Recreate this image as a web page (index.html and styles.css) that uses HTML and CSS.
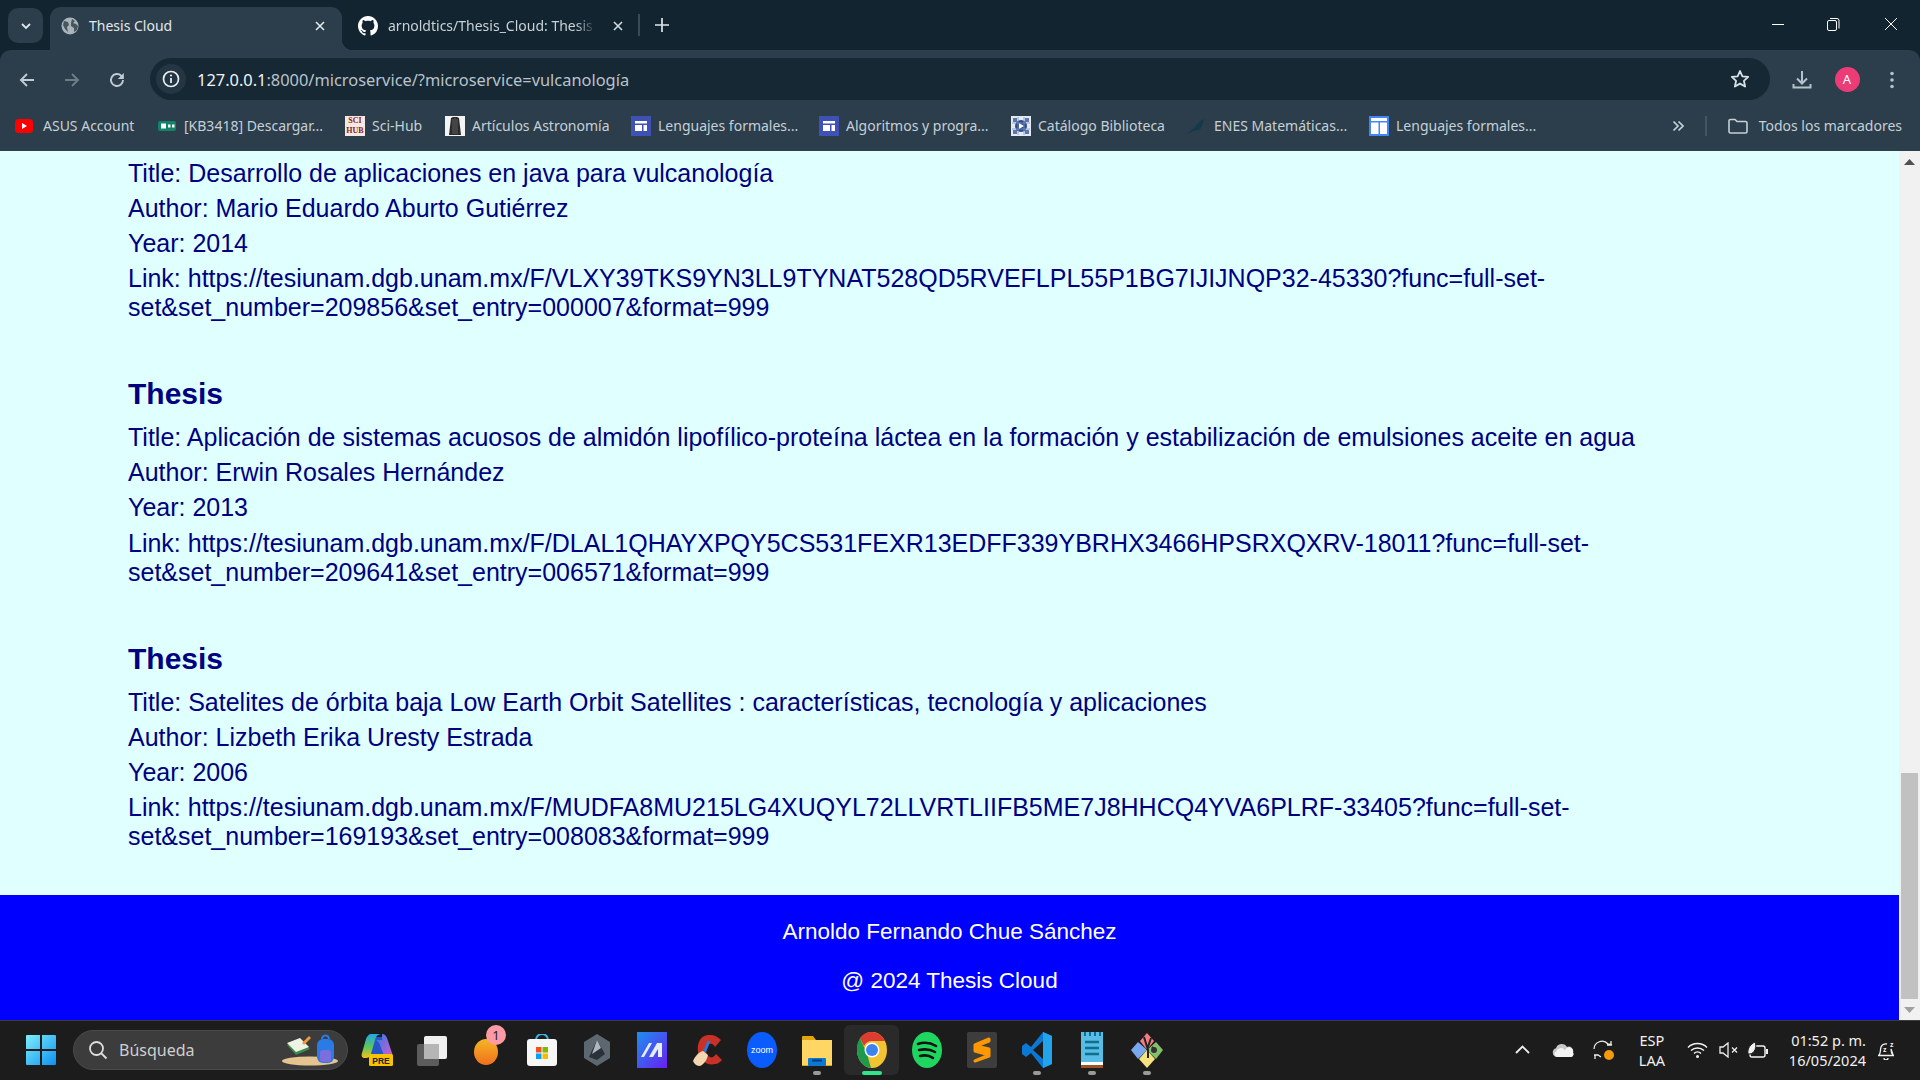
FILE: index.html
```html
<!DOCTYPE html>
<html lang="es">
<head>
    <meta charset="UTF-8">
    <title>Thesis Cloud</title>
    <link rel="stylesheet" href="styles.css">
</head>
<body>
    <!-- browser chrome -->
    <div class="tabstrip">
        <div class="tab-search"><svg width="12" height="12" viewBox="0 0 12 12"><path d="M2 4l4 4 4-4" fill="none" stroke="#dfe6ea" stroke-width="1.8"/></svg></div>
        <div class="tab tab-active">
            <svg class="favicon" width="18" height="18" viewBox="0 0 18 18"><circle cx="9" cy="9" r="8.5" fill="#aab4bb"/><path d="M3 4l4 1 1 3-2 2 1 5-3-3-2-4zM11 2l3 2-2 2 3 1 2 2-1 4-3 2 0-4-3-2 0-3z" fill="#46565f"/></svg>
            <span class="tab-title">Thesis Cloud</span>
            <svg class="tab-close" width="12" height="12" viewBox="0 0 12 12"><path d="M2 2l8 8M10 2l-8 8" stroke="#e3e8eb" stroke-width="1.6"/></svg>
        </div>
        <div class="tab tab-other">
            <svg class="favicon" width="20" height="20" viewBox="0 0 16 16"><path fill="#fff" d="M8 0C3.58 0 0 3.58 0 8c0 3.54 2.29 6.53 5.47 7.59.4.07.55-.17.55-.38 0-.19-.01-.82-.01-1.49-2.01.37-2.53-.49-2.69-.94-.09-.23-.48-.94-.82-1.13-.28-.15-.68-.52-.01-.53.63-.01 1.08.58 1.23.82.72 1.21 1.87.87 2.33.66.07-.52.28-.87.51-1.07-1.78-.2-3.64-.89-3.64-3.95 0-.87.31-1.59.82-2.15-.08-.2-.36-1.02.08-2.12 0 0 .67-.21 2.2.82.64-.18 1.32-.27 2-.27s1.36.09 2 .27c1.53-1.04 2.2-.82 2.2-.82.44 1.1.16 1.92.08 2.12.51.56.82 1.27.82 2.15 0 3.07-1.87 3.75-3.65 3.95.29.25.54.73.54 1.48 0 1.07-.01 1.93-.01 2.2 0 .21.15.46.55.38A8.01 8.01 0 0016 8c0-4.42-3.58-8-8-8z"/></svg>
            <span class="tab-title tab-fade">arnoldtics/Thesis_Cloud: Thesis</span>
            <svg class="tab-close" width="12" height="12" viewBox="0 0 12 12"><path d="M2 2l8 8M10 2l-8 8" stroke="#d5dce0" stroke-width="1.6"/></svg>
        </div>
        <div class="tab-divider"></div>
        <svg class="tab-new" width="14" height="14" viewBox="0 0 14 14"><path d="M7 0v14M0 7h14" stroke="#dfe6ea" stroke-width="1.7"/></svg>
        <div class="window-controls">
            <svg width="14" height="14" viewBox="0 0 14 14"><path d="M1 7.5h12" stroke="#fff"/></svg>
            <svg width="14" height="14" viewBox="0 0 14 14"><rect x="1.5" y="3.5" width="9" height="10" rx="1.5" fill="none" stroke="#fff"/><path d="M4 1.5h7a2 2 0 012 2v8" fill="none" stroke="#fff"/></svg>
            <svg width="14" height="14" viewBox="0 0 14 14"><path d="M1 1l12 12M13 1L1 13" stroke="#fff"/></svg>
        </div>
    </div>

    <div class="toolbar">
        <div class="tool-btn"><svg width="18" height="18" viewBox="0 0 18 18"><path d="M16 9H3M9 3L3 9l6 6" fill="none" stroke="#c0ccd4" stroke-width="1.9"/></svg></div>
        <div class="tool-btn"><svg width="18" height="18" viewBox="0 0 18 18"><path d="M2 9h13M9 3l6 6-6 6" fill="none" stroke="#6d7d88" stroke-width="1.9"/></svg></div>
        <div class="tool-btn"><svg width="18" height="18" viewBox="0 0 18 18"><path d="M15 9a6 6 0 11-1.8-4.3L15 6.5" fill="none" stroke="#c0ccd4" stroke-width="1.9"/><path d="M15.8 2v6h-6z" fill="#c0ccd4"/></svg></div>
        <div class="omnibox">
            <div class="info-chip"><svg width="18" height="18" viewBox="0 0 18 18"><circle cx="9" cy="9" r="7.5" fill="none" stroke="#e8edf0" stroke-width="1.7"/><path d="M9 8v5" stroke="#e8edf0" stroke-width="1.8"/><circle cx="9" cy="5.5" r="1.1" fill="#e8edf0"/></svg></div>
            <span class="url"><span class="url-host">127.0.0.1</span>:8000/microservice/?microservice=vulcanología</span>
            <svg class="star" width="20" height="20" viewBox="0 0 20 20"><path d="M10 2l2.4 5.3 5.8.6-4.3 3.9 1.2 5.7L10 14.6l-5.1 2.9 1.2-5.7L1.8 7.9l5.8-.6z" fill="none" stroke="#dbe2e6" stroke-width="1.8" stroke-linejoin="round"/></svg>
        </div>
        <div class="tool-right">
            <div class="tool-btn"><svg width="20" height="20" viewBox="0 0 20 20"><path d="M10 1v12M5 8.5l5 5 5-5M1.5 14v3.5h17V14" fill="none" stroke="#b4c2cc" stroke-width="2"/></svg></div>
            <div class="tool-btn"><div class="avatar">A</div></div>
            <div class="tool-btn"><svg width="6" height="18" viewBox="0 0 6 18"><circle cx="3" cy="2.5" r="1.8" fill="#b4c2cc"/><circle cx="3" cy="9" r="1.8" fill="#b4c2cc"/><circle cx="3" cy="15.5" r="1.8" fill="#b4c2cc"/></svg></div>
        </div>
    </div>

    <div class="bookmarks">
        <div class="bookmark-list">
            <div class="bookmark"><svg width="21" height="14" viewBox="0 0 21 14"><rect width="18" height="14" rx="3.5" fill="#f00"/><path d="M7 4l5 3-5 3z" fill="#fff"/></svg>ASUS Account</div>
            <div class="bookmark"><svg width="19" height="12" viewBox="0 0 19 12"><rect y="1" width="18" height="10" rx="2" fill="#118467"/><rect x="3" y="3.5" width="5" height="5" fill="#fff"/><rect x="10" y="4.5" width="2.5" height="3" fill="#fff"/><rect x="14" y="4.5" width="2.5" height="3" fill="#fff"/></svg>[KB3418] Descargar...</div>
            <div class="bookmark"><span class="scihub">SCI<br>HUB</span>Sci-Hub</div>
            <div class="bookmark"><svg width="20" height="20" viewBox="0 0 20 20"><rect width="20" height="20" fill="#f4f4f4"/><path d="M6 2l2-1h4l2 1 2 17H4z" fill="#2a2a2a"/><path d="M8 3v15M10 2v16M12 3v15" stroke="#777" stroke-width=".7"/></svg>Artículos Astronomía</div>
            <div class="bookmark"><svg width="20" height="20" viewBox="0 0 20 20"><rect width="20" height="20" fill="#3f51b5"/><path d="M4 5h12v2.5H4zM4 9h7v6H4zM12.5 9H16v6h-3.5z" fill="#fff"/></svg>Lenguajes formales...</div>
            <div class="bookmark"><svg width="20" height="20" viewBox="0 0 20 20"><rect width="20" height="20" fill="#3f51b5"/><path d="M4 5h12v2.5H4zM4 9h7v6H4zM12.5 9H16v6h-3.5z" fill="#fff"/></svg>Algoritmos y progra...</div>
            <div class="bookmark"><svg width="20" height="20" viewBox="0 0 20 20"><rect width="20" height="20" fill="#e4e9f2"/><path d="M2 2h4v4H2zM14 2h4v4h-4zM2 14h4v4H2zM14 14h4v4h-4z" fill="#5d78ad"/><circle cx="10" cy="10" r="6" fill="#2f4c8c"/><path d="M8 7l5 3-5 3z" fill="#fff"/><path d="M7 1v18M13 1v18M1 7h18M1 13h18" stroke="#7c93bf" stroke-width=".8"/></svg>Catálogo Biblioteca</div>
            <div class="bookmark"><svg width="20" height="16" viewBox="0 0 20 16"><path d="M0 15c3-1 5-3 8-6 2-3 5-5 8-8 1 0 1 2 0 3-1 3-1 6-4 8-3 0-7 1-9 3z" fill="#123a4c"/></svg>ENES Matemáticas...</div>
            <div class="bookmark"><svg width="20" height="20" viewBox="0 0 20 20"><rect width="20" height="20" fill="#4285f4"/><path d="M2 2h16v3H2zM2 6.5h7.5V18H2zM11 6.5h7V18h-7z" fill="#fff"/></svg>Lenguajes formales...</div>
        </div>
        <svg class="more" width="12" height="12" viewBox="0 0 12 12"><path d="M1.5 1.5L6 6l-4.500 4.500M6.500 1.500L11 6l-4.500 4.500" fill="none" stroke="#c5d0d7" stroke-width="1.7"/></svg>
        <div class="bookmarks-divider"></div>
        <div class="all-bookmarks"><svg width="20" height="16" viewBox="0 0 20 16"><path d="M1 3a1.5 1.5 0 011.5-1.5H7l2 2h8.5A1.5 1.5 0 0119 5v8.500a1.500 1.500 0 01-1.500 1.500h-15A1.500 1.500 0 011 13.500z" fill="none" stroke="#c5d0d7" stroke-width="1.6"/></svg>Todos los marcadores</div>
    </div>

    <!-- page -->
    <div class="viewport">
        <div class="page">
            <main class="thesis-list">
                <section class="thesis">
                    <p>Title: Desarrollo de aplicaciones en java para vulcanología</p>
                    <p>Author: Mario Eduardo Aburto Gutiérrez</p>
                    <p>Year: 2014</p>
                    <p>Link: https://tesiunam.dgb.unam.mx/F/VLXY39TKS9YN3LL9TYNAT528QD5RVEFLPL55P1BG7IJIJNQP32-45330?func=full-set-set&amp;set_number=209856&amp;set_entry=000007&amp;format=999</p>
                </section>
                <section class="thesis">
                    <h2>Thesis</h2>
                    <p>Title: Aplicación de sistemas acuosos de almidón lipofílico-proteína láctea en la formación y estabilización de emulsiones aceite en agua</p>
                    <p>Author: Erwin Rosales Hernández</p>
                    <p>Year: 2013</p>
                    <p>Link: https://tesiunam.dgb.unam.mx/F/DLAL1QHAYXPQY5CS531FEXR13EDFF339YBRHX3466HPSRXQXRV-18011?func=full-set-set&amp;set_number=209641&amp;set_entry=006571&amp;format=999</p>
                </section>
                <section class="thesis">
                    <h2>Thesis</h2>
                    <p>Title: Satelites de órbita baja Low Earth Orbit Satellites : características, tecnología y aplicaciones</p>
                    <p>Author: Lizbeth Erika Uresty Estrada</p>
                    <p>Year: 2006</p>
                    <p>Link: https://tesiunam.dgb.unam.mx/F/MUDFA8MU215LG4XUQYL72LLVRTLIIFB5ME7J8HHCQ4YVA6PLRF-33405?func=full-set-set&amp;set_number=169193&amp;set_entry=008083&amp;format=999</p>
                </section>
            </main>
            <footer class="site-footer">
                <p>Arnoldo Fernando Chue Sánchez</p>
                <p>@ 2024 Thesis Cloud</p>
            </footer>
        </div>
        <div class="scrollbar">
            <div class="scroll-btn"><svg width="11" height="6" viewBox="0 0 11 6"><path d="M5.5 0L11 6H0z" fill="#505050"/></svg></div>
            <div class="scroll-track"></div>
            <div class="scroll-thumb"></div>
            <div class="scroll-btn"><svg width="11" height="6" viewBox="0 0 11 6"><path d="M0 0h11L5.5 6z" fill="#a0a0a0"/></svg></div>
        </div>
    </div>

    <!-- windows taskbar -->
    <div class="taskbar">
        <svg class="start" width="30" height="30" viewBox="0 0 30 30">
            <defs><linearGradient id="win" x1="0" y1="0" x2="1" y2="1"><stop offset="0" stop-color="#7cf0fb"/><stop offset="1" stop-color="#0f8ff0"/></linearGradient></defs>
            <path d="M0 1a1 1 0 011-1h13v14H0zM16 0h13a1 1 0 011 1v13H16zM0 16h14v14H1a1 1 0 01-1-1zM16 16h14v13a1 1 0 01-1 1H16z" fill="url(#win)"/>
        </svg>
        <div class="search">
            <svg width="20" height="20" viewBox="0 0 20 20"><circle cx="8.5" cy="8.5" r="6.5" fill="none" stroke="#ddd" stroke-width="1.8"/><path d="M13 13l5.5 5.5" stroke="#ddd" stroke-width="1.8"/></svg>
            <span>Búsqueda</span>
            <svg class="search-art" width="58" height="34" viewBox="0 0 58 34">
                <ellipse cx="29" cy="28" rx="28" ry="4.5" fill="#e6c48f"/>
                <path d="M6 12l14-5 9 9-14 6z" fill="#3d8a4d"/><path d="M6 10l13-5 9 9-13 5z" fill="#eef3e6"/><path d="M21 10l7-7 2 2-7 7z" fill="#f09a3e"/>
                <rect x="36" y="6" width="17" height="24" rx="6" fill="#2a7be4"/><rect x="39" y="17" width="11" height="12" rx="3" fill="#7b6fe0"/><path d="M41 6a3.5 3.5 0 017 0" fill="none" stroke="#2a7be4" stroke-width="2"/>
            </svg>
        </div>
        <div class="task-icons">
            <div class="task-icon"><svg width="32" height="34" viewBox="0 0 32 34"><defs><linearGradient id="cop" x1="0" y1="0" x2="0" y2="1"><stop offset="0" stop-color="#1ea7e8"/><stop offset=".55" stop-color="#5fc65a"/><stop offset="1" stop-color="#f6c21c"/></linearGradient><linearGradient id="cop2" x1="0" y1="0" x2="1" y2="1"><stop offset="0" stop-color="#2c7be5"/><stop offset="1" stop-color="#d65bd0"/></linearGradient></defs><path d="M14 4h8l4 20H9z" fill="#2456c8"/><path d="M10 1h11c-4 0-6 2-7 6l-4 14c-1 3-3 4-5 4H4c-3 0-4-2-3-5l4-14c1-3 3-5 5-5z" fill="url(#cop)"/><path d="M21 1c3 0 4 2 5 4l5 15c1 3 0 5-3 5h-9c3 0 4-2 3-5l-3-8c-1-3-3-5-5-5h7z" fill="url(#cop2)"/><rect x="8" y="21" width="24" height="12" rx="1.5" fill="#f8c400"/><text x="20" y="30.5" class="pre">PRE</text></svg></div>
            <div class="task-icon"><svg width="32" height="32" viewBox="0 0 32 32"><rect x="1" y="10" width="22" height="22" rx="2" fill="#5c5c5c"/><rect x="8" y="2" width="23" height="23" rx="2" fill="#f0f0f0"/><rect x="8" y="10" width="15" height="15" fill="#b5b5b5"/></svg></div>
            <div class="task-icon task-badged"><svg width="26" height="30" viewBox="0 0 26 30"><defs><linearGradient id="org" x1="0" y1="0" x2="0" y2="1"><stop offset="0" stop-color="#f4b623"/><stop offset="1" stop-color="#f0701e"/></linearGradient></defs><ellipse cx="12" cy="17" rx="12" ry="13" fill="url(#org)"/></svg><span class="badge">1</span></div>
            <div class="task-icon"><svg width="30" height="32" viewBox="0 0 30 32"><path d="M9 6a6 6 0 0112 0" fill="none" stroke="#35b5e8" stroke-width="2"/><rect y="5" width="30" height="27" rx="3" fill="#f7f7f7"/><rect x="9" y="13" width="5.5" height="5.5" fill="#f25022"/><rect x="15.5" y="13" width="5.5" height="5.5" fill="#7fba00"/><rect x="9" y="19.5" width="5.5" height="5.5" fill="#00a4ef"/><rect x="15.5" y="19.5" width="5.5" height="5.5" fill="#ffb900"/></svg></div>
            <div class="task-icon"><svg width="28" height="32" viewBox="0 0 28 32"><path d="M14 0l13 8v16l-13 8-13-8V8z" fill="#5d6770"/><path d="M14 6l8 14-8 6-8-3z" fill="#2a3138"/><path d="M14 6l4 8-9 6z" fill="#aeb7bd"/></svg></div>
            <div class="task-icon"><svg width="30" height="36" viewBox="0 0 30 36"><defs><linearGradient id="mi" x1="0" y1="0" x2="1" y2="1"><stop offset="0" stop-color="#1c8ff0"/><stop offset="1" stop-color="#6a1ff0"/></linearGradient></defs><rect width="30" height="36" fill="url(#mi)"/><path d="M4 25L12 11h3L7 25zM12 25l8-14h5v14h-4v-8l-5 8z" fill="#e6eefc"/></svg></div>
            <div class="task-icon"><svg width="32" height="34" viewBox="0 0 32 34"><path d="M30 7a15 15 0 00-13-5C8 3 6 12 7 19c1 8 9 14 17 12 3 0 5-2 7-4l-6-6c-2 3-4 4-6 3-5-1-5-11-1-13 3-1 5 1 6 3z" fill="#c93127"/><path d="M18 8l-5 12" stroke="#2a78d8" stroke-width="3"/><path d="M2 28c2-5 6-9 10-10l5 4c-1 5-4 9-8 11-3 0-6-2-7-5z" fill="#f2d7b0"/></svg></div>
            <div class="task-icon"><svg width="30" height="36" viewBox="0 0 30 36"><ellipse cx="15" cy="18" rx="15" ry="18" fill="#0b5cff"/><text x="15" y="21" class="zoom-word">zoom</text></svg></div>
            <div class="task-icon task-open"><svg width="30" height="32" viewBox="0 0 30 32"><path d="M0 3a1 1 0 011-1h10l3 4h16v6H0z" fill="#e2a50e"/><rect y="6" width="30" height="26" fill="#fdd663"/><path d="M0 32h30v-1H0z" fill="#e2a50e"/><rect x="6" y="24" width="18" height="8" rx="1" fill="#0a78d4"/><rect x="10" y="25.5" width="10" height="2" fill="#053c6e"/></svg><span class="run-dot"></span></div>
            <div class="task-icon task-active"><svg width="30" height="36" viewBox="0 0 30 36"><ellipse cx="15" cy="18" rx="15" ry="18" fill="#f1c232"/><path d="M15 0a15 18 0 0113 9H15a9 9 0 00-8 5L3 6a15 18 0 0112-6z" fill="#dd3c30"/><path d="M0 18a15 18 0 013-12l7 16 4 14A15 18 0 010 18z" fill="#1e9a4b"/><circle cx="15" cy="18" r="7.5" fill="#fff"/><circle cx="15" cy="18" r="6" fill="#3e82f0"/></svg><span class="run-bar"></span></div>
            <div class="task-icon"><svg width="30" height="36" viewBox="0 0 30 36"><ellipse cx="15" cy="18" rx="15" ry="18" fill="#1ed760"/><path d="M6 12c6-2 13-1 18 2M7 18c5-1 11-1 16 2M8 24c4-1 9-1 13 2" fill="none" stroke="#111" stroke-width="2.6" stroke-linecap="round"/></svg></div>
            <div class="task-icon"><svg width="30" height="36" viewBox="0 0 30 36"><rect width="30" height="36" rx="2" fill="#3d3d3d"/><path d="M22 7L8 13v6l14 4-14 6v0l14-5v-7L9 14l13-5z" fill="#ff9800" stroke="#ff9800" stroke-width="3" stroke-linejoin="round"/></svg></div>
            <div class="task-icon task-open"><svg width="30" height="36" viewBox="0 0 30 36"><path d="M21 0l9 4v28l-9 4L9 21l-5 4-4-3V14l4-3 5 4z" fill="#0a78d4"/><path d="M21 0l9 4v28l-9 4z" fill="#23a3ea"/><path d="M21 9L11 18l10 9z" fill="#1c1c1c"/></svg><span class="run-dot"></span></div>
            <div class="task-icon task-open"><svg width="24" height="36" viewBox="0 0 24 36"><rect width="22" height="36" x="1" fill="#57bde4"/><path d="M1 30h22v6H1z" fill="#fff"/><path d="M1 33h22v3H1z" fill="#9a5226"/><path d="M5 10h14M5 16h14M5 22h14" stroke="#116e91" stroke-width="2.4"/><path d="M5 0v4M10 0v4M15 0v4M20 0v4" stroke="#116e91" stroke-width="2"/></svg><span class="run-dot"></span></div>
            <div class="task-icon task-open"><svg width="32" height="36" viewBox="0 0 32 36"><path d="M16 1l7 8-7 9-7-9z" fill="#f47d80"/><path d="M7 10l9 8-9 9-7-9z" fill="#78a9f0"/><path d="M25 10l7 8-7 9-9-9z" fill="#83c06c"/><path d="M16 18l8 9-8 9-8-9z" fill="#f6e27f"/><path d="M13 5l4 13v8M20 6l-4 12M21 15l3 2" fill="none" stroke="#222" stroke-width="2"/><circle cx="23" cy="18" r="3" fill="#333"/></svg><span class="run-dot"></span></div>
        </div>
        <div class="tray">
            <svg class="tray-caret" width="15" height="9" viewBox="0 0 15 9"><path d="M1 8l6.5-6.5L14 8" fill="none" stroke="#eee" stroke-width="1.8"/></svg>
            <svg class="tray-cloud" width="22" height="14" viewBox="0 0 22 14"><path d="M5 14a4.5 4.5 0 01-1-8.800A6 6 0 0115 4a4.500 4.500 0 016 5.500A3 3 0 0119 14z" fill="#c8c8c8"/><path d="M5 14a3 3 0 01-1-5.500A5 5 0 0113 7.500a4 4 0 018 2A3 3 0 0119 14z" fill="#f4f4f4"/></svg>
            <svg class="tray-sync" width="22" height="22" viewBox="0 0 22 22"><path d="M1 10a8 8 0 0114-5l4 1M18 2v4h-4M1 16h4l3 2M2 20v-4" fill="none" stroke="#eee" stroke-width="1.3"/><circle cx="16" cy="16" r="5" fill="#f7990c"/></svg>
            <div class="tray-lang">ESP<br>LAA</div>
            <svg class="tray-wifi" width="21" height="16" viewBox="0 0 21 16"><path d="M1 5.500a13.500 13.500 0 0119 0M4 8.500a9.500 9.500 0 0113 0M7 11.500a5 5 0 017 0" fill="none" stroke="#f2f2f2" stroke-width="1.5"/><circle cx="10.5" cy="14.5" r="1.5" fill="#f2f2f2"/></svg>
            <svg class="tray-vol" width="20" height="16" viewBox="0 0 20 16"><path d="M1 5h3l5-4v14l-5-4H1z" fill="none" stroke="#eee" stroke-width="1.3"/><path d="M13 5.5l5 5M18 5.5l-5 5" stroke="#eee" stroke-width="1.3"/></svg>
            <svg class="tray-batt" width="22" height="18" viewBox="0 0 22 18"><rect x="3" y="5" width="15" height="11" rx="2" fill="none" stroke="#f2f2f2" stroke-width="1.4"/><path d="M19 8h2v5h-2z" fill="#f2f2f2"/><path d="M1 13C0 7 4 3 8 1c2 5 0 11-5 12z" fill="#f2f2f2" stroke="#1c1c1c"/></svg>
            <div class="tray-clock">01:52 p. m.<br>16/05/2024</div>
            <svg class="tray-bell" width="18" height="20" viewBox="0 0 18 20"><path d="M2 15c2-2 1-5 2-8a5 5 0 016-3M14 9c0 3 1 5 2 6zM1 15.5h16M7 18a2 2 0 004 0" fill="none" stroke="#f2f2f2" stroke-width="1.3"/><text x="13" y="7" class="zzz">z</text><text x="6" y="12" class="zzz">z</text></svg>
        </div>
    </div>
</body>
</html>
```

FILE: styles.css
```css
* {
    box-sizing: border-box;
}
html, body {
    height: 100%;
    overflow: hidden;
}
body {
    margin: 0;
    display: flex;
    flex-direction: column;
    background: #122430;
    font-family: "Noto Sans", sans-serif;
}
svg {
    flex-shrink: 0;
    display: block;
}

/* tab strip */
.tabstrip {
    height: 50px;
    flex-shrink: 0;
    display: flex;
    align-items: flex-end;
    padding-left: 8px;
    background: #122430;
    color: #e3e8eb;
}
.tab-search {
    width: 35px;
    height: 35px;
    margin-bottom: 7px;
    border-radius: 10px;
    background: #2c3e4b;
    display: flex;
    align-items: center;
    justify-content: center;
}
.tab {
    position: relative;
    display: flex;
    align-items: center;
    height: 43px;
    width: 292px;
    padding: 0 16px 6px 11px;
}
.tab-active {
    margin-left: 7px;
    background: #2c3e4b;
    border-radius: 11px 11px 0 0;
}
.tab-active::after {
    content: "";
    position: absolute;
    right: -11px;
    bottom: 0;
    width: 11px;
    height: 11px;
    background: radial-gradient(circle at 100% 0, transparent 11px, #2c3e4b 11.5px);
}
.tab-other {
    width: 297px;
    padding-left: 16px;
    padding-right: 15px;
}
.favicon {
    margin-right: 10px;
}
.tab-title {
    flex: 1;
    white-space: nowrap;
    font-size: 14px;
}
.tab-fade {
    mask-image: linear-gradient(to right, #000 84%, transparent 93%);
    color: #c8d2d8;
}
.tab-divider {
    width: 2px;
    height: 22px;
    margin: 0 0 14px -1px;
    background: #3a4b57;
}
.tab-new {
    margin: 0 0 18px 15px;
}
.window-controls {
    margin-left: auto;
    display: flex;
    gap: 41px;
    padding: 0 22px 19px 0;
}
.window-controls svg:last-child {
    margin-left: 3px;
}

/* toolbar */
.toolbar {
    height: 50px;
    flex-shrink: 0;
    display: flex;
    align-items: flex-end;
    padding: 0 10px 0 9px;
    gap: 9px;
    background: #2c3e4b;
    border-radius: 11px 11px 0 0;
}
.tool-btn {
    width: 36px;
    height: 42px;
    padding-top: 1px;
    display: flex;
    align-items: center;
    justify-content: center;
}
.omnibox {
    flex: 1;
    height: 42px;
    margin: 0 5px 0 6px;
    padding: 0 20px 0 5px;
    display: flex;
    align-items: center;
    border-radius: 21px;
    background: #172835;
}
.info-chip {
    width: 30px;
    height: 30px;
    margin-left: 1px;
    border-radius: 50%;
    background: #243643;
    display: flex;
    align-items: center;
    justify-content: center;
}
.url {
    flex: 1;
    margin-left: 11px;
    font-size: 16.4px;
    color: #b7c3cb;
    white-space: nowrap;
}
.url-host {
    color: #f1f4f6;
}
.tool-right {
    display: flex;
    gap: 9px;
}
.avatar {
    width: 25px;
    height: 25px;
    border-radius: 50%;
    background: #ec3c78;
    color: #fff;
    font-size: 13px;
    line-height: 25px;
    text-align: center;
}

/* bookmarks bar */
.bookmarks {
    height: 51px;
    flex-shrink: 0;
    display: flex;
    align-items: center;
    padding: 0 18px 0 15px;
    background: #2c3e4b;
    color: #c5d0d7;
    font-size: 14px;
}
.bookmark-list {
    display: grid;
    grid-template-columns: 143px 187px 100px 186px 188px 192px 176px 182px 190px;
}
.bookmark {
    display: flex;
    align-items: center;
    gap: 7px;
    white-space: nowrap;
}
.scihub {
    width: 20px;
    height: 20px;
    background: #f3e9e2;
    color: #8a1c1c;
    font: bold 8px/10px "Liberation Serif", serif;
    text-align: center;
}
.more {
    margin-left: 113px;
}
.bookmarks-divider {
    width: 2px;
    height: 20px;
    margin-left: 21px;
    background: #45555f;
}
.all-bookmarks {
    margin-left: auto;
    display: flex;
    align-items: center;
    gap: 11px;
    white-space: nowrap;
}

/* page content */
.viewport {
    flex: 1;
    min-height: 0;
    display: flex;
    background: #e0ffff;
}
.page {
    flex: 1;
    min-width: 0;
    overflow: hidden;
    display: flex;
    flex-direction: column;
    font-family: "Liberation Sans", Arial, sans-serif;
}
.thesis-list {
    flex: 1;
    padding: 7.5px 240px 0 128px;
    color: #000080;
}
.thesis {
    margin-bottom: 54px;
}
.thesis:last-child {
    margin-bottom: 42px;
}
.thesis h2 {
    margin: 0 0 12px;
    font-size: 30px;
    line-height: 35px;
}
.thesis p {
    margin: 0 0 6.2px;
    font-size: 25px;
    line-height: 29px;
}
.site-footer {
    height: 125px;
    flex-shrink: 0;
    padding-top: 23px;
    background: #00f;
    color: #fff;
    text-align: center;
}
.site-footer p {
    margin: 0 0 21px;
    font-size: 22.5px;
    line-height: 28px;
}

/* scrollbar */
.scrollbar {
    width: 21px;
    flex-shrink: 0;
    display: flex;
    flex-direction: column;
    align-items: center;
    background: #f1f1f1;
}
.scroll-btn {
    width: 21px;
    height: 21px;
    display: flex;
    align-items: center;
    justify-content: center;
}
.scroll-track {
    flex: 1;
}
.scroll-thumb {
    width: 17px;
    height: 226px;
    background: #c1c1c1;
}

/* taskbar */
.taskbar {
    height: 60px;
    flex-shrink: 0;
    display: flex;
    align-items: center;
    padding: 0 0 2px 26px;
    background: #1c1c1c;
    border-top: 1px solid #3b3b3b;
    color: #f2f2f2;
}
.search {
    width: 275px;
    height: 40px;
    margin-left: 17px;
    padding: 0 8px 0 14px;
    display: flex;
    align-items: center;
    gap: 11px;
    border-radius: 20px;
    background: #3c3c3c;
    border: 1px solid #4a4a4a;
    color: #cfcfcf;
    font-size: 16px;
}
.search-art {
    margin-left: auto;
}
.task-icons {
    display: flex;
    margin-left: 1px;
}
.task-icon {
    position: relative;
    width: 55px;
    height: 50px;
    display: flex;
    align-items: center;
    justify-content: center;
}
.task-active {
    background: #2a2a2a;
    border-radius: 6px;
}
.badge {
    position: absolute;
    top: 0;
    right: 8px;
    width: 20px;
    height: 20px;
    border-radius: 50%;
    background: #ff9aa5;
    color: #222;
    font-size: 13px;
    line-height: 20px;
    text-align: center;
}
.run-dot, .run-bar {
    position: absolute;
    bottom: 0;
    left: 50%;
    height: 4px;
    border-radius: 2px;
    transform: translateX(-50%);
}
.run-dot {
    width: 8px;
    background: #9a9a9a;
}
.run-bar {
    width: 20px;
    background: #2fe58b;
}
.pre {
    font: bold 8.5px "Liberation Sans", sans-serif;
    fill: #222;
    text-anchor: middle;
}
.zoom-word {
    font: 9px "Liberation Sans", sans-serif;
    fill: #fff;
    text-anchor: middle;
}
.tray {
    margin-left: auto;
    display: flex;
    align-items: center;
    padding-right: 25px;
    font-size: 14.5px;
    line-height: 20px;
}
.tray-cloud {
    margin-left: 22px;
}
.tray-sync {
    margin-left: 19px;
}
.tray-lang {
    width: 40px;
    margin-left: 17px;
    text-align: center;
}
.tray-wifi {
    margin-left: 15px;
}
.tray-vol {
    margin-left: 11px;
}
.tray-batt {
    margin-left: 8px;
}
.tray-clock {
    margin-left: 20px;
    text-align: right;
    white-space: nowrap;
}
.tray-bell {
    margin-left: 11px;
}
.zzz {
    font: bold 7px "Liberation Sans", sans-serif;
    fill: #f2f2f2;
}
```
